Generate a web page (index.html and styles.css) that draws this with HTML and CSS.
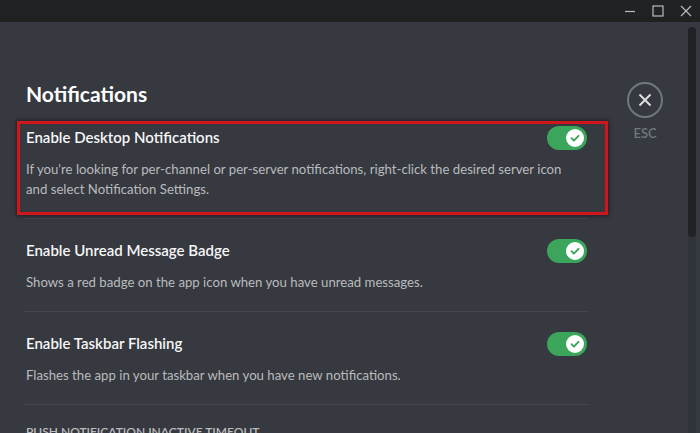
FILE: index.html
```html
<!DOCTYPE html>
<html lang="en">
<head>
<meta charset="utf-8">
<title>Notifications</title>
<link rel="stylesheet" href="styles.css">
</head>
<body>
<div class="titlebar">
  <div class="win-controls">
    <svg class="win-btn" width="12" height="12" viewBox="0 0 12 12"><path d="M1 6.5h10" stroke="#b9bbbe" stroke-width="1.2" fill="none"/></svg>
    <svg class="win-btn" width="12" height="12" viewBox="0 0 12 12"><rect x="1" y="1" width="10" height="10" stroke="#b9bbbe" stroke-width="1.2" fill="none"/></svg>
    <svg class="win-btn" width="12" height="12" viewBox="0 0 12 12"><path d="M1 1l10 10M11 1L1 11" stroke="#b9bbbe" stroke-width="1.2" fill="none"/></svg>
  </div>
</div>
<div class="main">
  <div class="content">
    <h2 class="heading">Notifications</h2>
    <div class="row">
      <div class="row-head">
        <div class="row-title">Enable Desktop Notifications</div>
        <div class="toggle"><span class="knob"><svg width="12" height="12" viewBox="0 0 12 12"><path d="M2.5 6.2l2.4 2.4 4.6-4.8" stroke="#3ba55c" stroke-width="1.9" fill="none" stroke-linecap="round" stroke-linejoin="round"/></svg></span></div>
      </div>
      <div class="row-desc">If you're looking for per-channel or per-server notifications, right-click the desired server icon and select Notification Settings.</div>
    </div>
    <div class="row">
      <div class="row-head">
        <div class="row-title">Enable Unread Message Badge</div>
        <div class="toggle"><span class="knob"><svg width="12" height="12" viewBox="0 0 12 12"><path d="M2.5 6.2l2.4 2.4 4.6-4.8" stroke="#3ba55c" stroke-width="1.9" fill="none" stroke-linecap="round" stroke-linejoin="round"/></svg></span></div>
      </div>
      <div class="row-desc">Shows a red badge on the app icon when you have unread messages.</div>
    </div>
    <div class="row">
      <div class="row-head">
        <div class="row-title">Enable Taskbar Flashing</div>
        <div class="toggle"><span class="knob"><svg width="12" height="12" viewBox="0 0 12 12"><path d="M2.5 6.2l2.4 2.4 4.6-4.8" stroke="#3ba55c" stroke-width="1.9" fill="none" stroke-linecap="round" stroke-linejoin="round"/></svg></span></div>
      </div>
      <div class="row-desc">Flashes the app in your taskbar when you have new notifications.</div>
    </div>
    <div class="section-label">Push Notification Inactive Timeout</div>
  </div>
  <div class="esc-col">
    <div class="esc-circle">
      <svg width="16" height="16" viewBox="0 0 16 16"><path d="M2.5 2.5l11 11M13.5 2.5l-11 11" stroke="#dcddde" stroke-width="2" fill="none"/></svg>
    </div>
    <div class="esc-label">ESC</div>
  </div>
  <div class="scroll-track"><div class="scroll-thumb"></div></div>
</div>
<div class="highlight"></div>
</body>
</html>
```
FILE: styles.css
```css
html, body {
  margin: 0;
  padding: 0;
}
body {
  width: 700px;
  height: 433px;
  overflow: hidden;
  background: #36393f;
  font-family: Lato, "Open Sans", sans-serif;
  position: relative;
}
.titlebar {
  height: 17px;
  background: #202225;
  border-bottom: 5px solid #1d2120;
  display: flex;
  justify-content: flex-end;
}
.win-controls {
  display: flex;
  align-items: center;
  gap: 16px;
  padding-right: 8px;
  padding-top: 5px;
}
.win-btn {
  display: block;
}
.main {
  display: flex;
  height: 411px;
}
.content {
  width: 564px;
  margin-left: 24px;
  padding-top: 60px;
}
.heading {
  margin: 0 0 19px 2px;
  font-size: 21px;
  line-height: 24px;
  font-weight: 700;
  color: #ffffff;
}
.row {
  padding-bottom: 19px;
  margin-bottom: 19px;
  border-bottom: 1px solid #44474d;
}
.row-head {
  display: flex;
  justify-content: space-between;
  align-items: flex-start;
}
.row-title {
  padding-left: 2px;
  font-size: 15px;
  line-height: 24px;
  font-weight: 600;
  color: #f6f6f7;
}
.toggle {
  width: 40px;
  height: 24px;
  margin-top: 1px;
  margin-right: 1px;
  border-radius: 12px;
  background: #3ba55c;
  display: flex;
  align-items: center;
  justify-content: flex-end;
  padding-right: 3px;
  box-sizing: border-box;
}
.knob {
  width: 18px;
  height: 18px;
  border-radius: 50%;
  background: #ffffff;
  display: flex;
  align-items: center;
  justify-content: center;
}
.knob svg {
  display: block;
}
.row-desc {
  max-width: 545px;
  margin-top: 9px;
  padding-left: 2px;
  font-size: 13.2px;
  line-height: 20px;
  color: #b9bbbe;
}
.section-label {
  padding-left: 2px;
  font-size: 12px;
  line-height: 16px;
  font-weight: 600;
  text-transform: uppercase;
  color: #b9bbbe;
}
.esc-col {
  margin-left: 39px;
  padding-top: 60px;
  width: 36px;
  display: flex;
  flex-direction: column;
  align-items: center;
}
.esc-circle {
  width: 36px;
  height: 36px;
  border: 2px solid #72767d;
  border-radius: 50%;
  box-sizing: border-box;
  display: flex;
  align-items: center;
  justify-content: center;
}
.esc-label {
  margin-top: 7px;
  font-size: 13px;
  line-height: 16px;
  font-weight: 600;
  color: #72767d;
}
.scroll-track {
  margin-left: 25px;
  margin-top: 5px;
  width: 8px;
  background: #2e3338;
  border-radius: 4px 4px 0 0;
}
.scroll-thumb {
  height: 210px;
  background: #202225;
  border-radius: 4px;
}
.highlight {
  position: absolute;
  left: 17px;
  top: 121px;
  width: 591px;
  height: 94px;
  box-sizing: border-box;
  border: 3px solid #d0161b;
  box-shadow: 0 0 4px 1px rgba(0, 0, 0, 0.45);
  pointer-events: none;
}
```
